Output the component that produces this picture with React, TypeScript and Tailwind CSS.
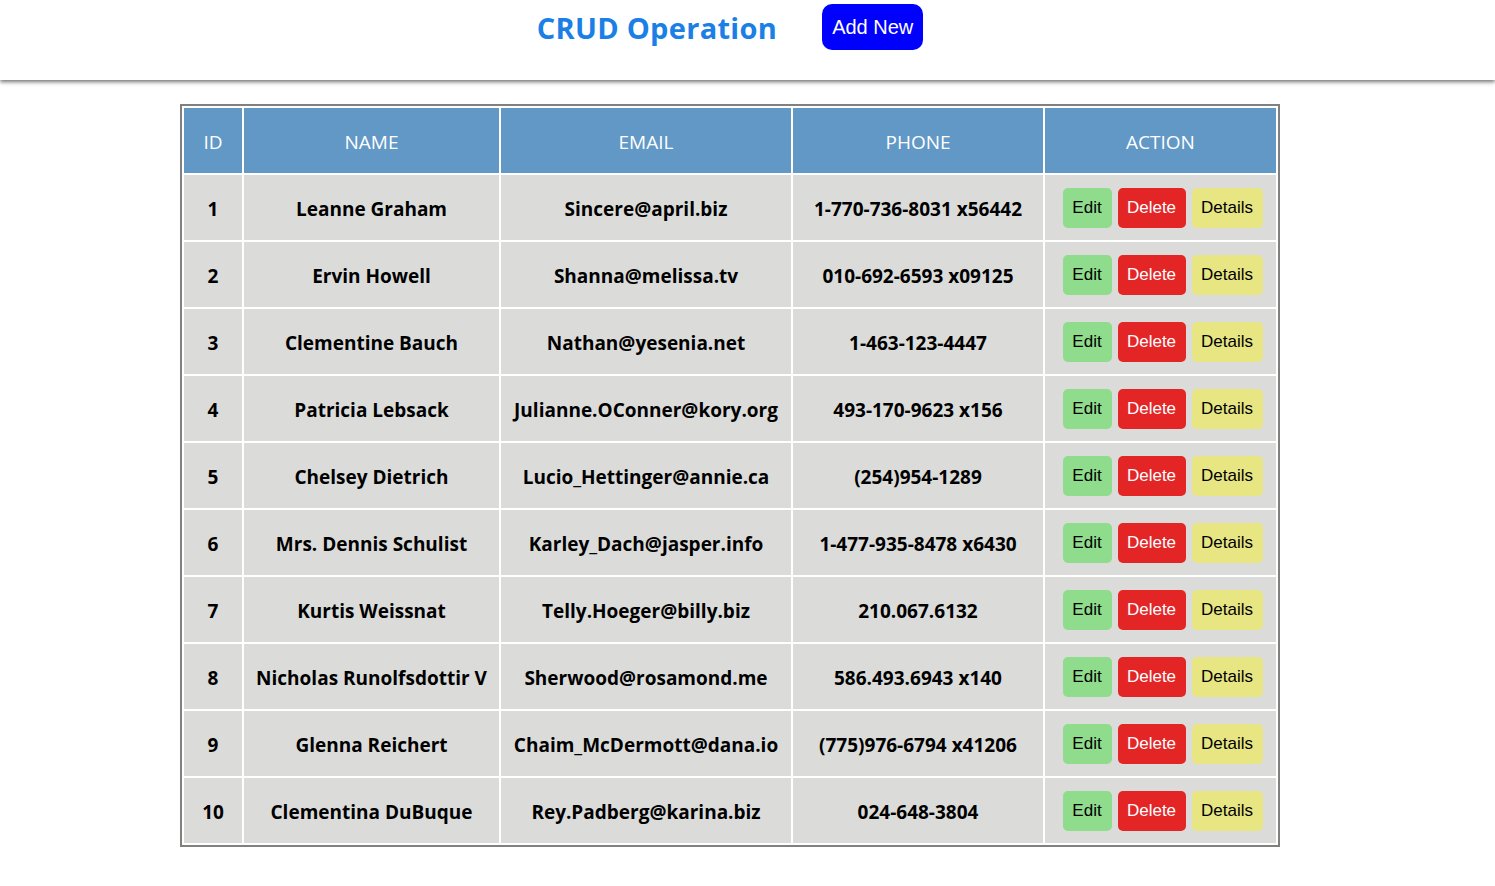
const users = [
  { id: 1, name: "Leanne Graham", email: "Sincere@april.biz", phone: "1-770-736-8031 x56442" },
  { id: 2, name: "Ervin Howell", email: "Shanna@melissa.tv", phone: "010-692-6593 x09125" },
  { id: 3, name: "Clementine Bauch", email: "Nathan@yesenia.net", phone: "1-463-123-4447" },
  { id: 4, name: "Patricia Lebsack", email: "Julianne.OConner@kory.org", phone: "493-170-9623 x156" },
  { id: 5, name: "Chelsey Dietrich", email: "Lucio_Hettinger@annie.ca", phone: "(254)954-1289" },
  { id: 6, name: "Mrs. Dennis Schulist", email: "Karley_Dach@jasper.info", phone: "1-477-935-8478 x6430" },
  { id: 7, name: "Kurtis Weissnat", email: "Telly.Hoeger@billy.biz", phone: "210.067.6132" },
  { id: 8, name: "Nicholas Runolfsdottir V", email: "Sherwood@rosamond.me", phone: "586.493.6943 x140" },
  { id: 9, name: "Glenna Reichert", email: "Chaim_McDermott@dana.io", phone: "(775)976-6794 x41206" },
  { id: 10, name: "Clementina DuBuque", email: "Rey.Padberg@karina.biz", phone: "024-648-3804" },
];

const App = () => {
  return (
    <div className="min-h-screen bg-white font-['Open_Sans',sans-serif]">
      <header className="h-20 flex justify-center items-start gap-[45px] pr-[35px] shadow-[0_2px_4px_rgba(0,0,0,0.55)]">
        <h1 className="mt-[6px] text-[29px] font-bold text-[#1b7fe6] tracking-[0.3px]">
          CRUD Operation
        </h1>
        <button className="mt-1 h-[46px] px-[10px] rounded-[10px] bg-[#0000ff] text-white text-[20px] font-['Liberation_Sans',sans-serif]">
          Add New
        </button>
      </header>

      <div className="mt-6 pl-[180px]">
        <table className="table-fixed w-[1100px] border-separate border-spacing-[2px] border-2 border-[#808080]">
          <colgroup>
            <col className="w-[58px]" />
            <col className="w-[255px]" />
            <col className="w-[290px]" />
            <col className="w-[250px]" />
            <col className="w-[231px]" />
          </colgroup>
          <thead>
            <tr className="h-[65px] bg-[#6198c6] text-white text-[19px]">
              <th className="font-normal pt-[3px]">ID</th>
              <th className="font-normal pt-[3px]">NAME</th>
              <th className="font-normal pt-[3px]">EMAIL</th>
              <th className="font-normal pt-[3px]">PHONE</th>
              <th className="font-normal pt-[3px]">ACTION</th>
            </tr>
          </thead>
          <tbody>
            {users.map((u) => (
              <tr key={u.id} className="h-[65px] bg-[#dbdcda] text-[19px] font-bold text-black text-center">
                <td className="pt-[3px]">{u.id}</td>
                <td className="pt-[3px]">{u.name}</td>
                <td className="pt-[3px]">{u.email}</td>
                <td className="pt-[3px]">{u.phone}</td>
                <td>
                  <div className="flex justify-center gap-[6px] pl-1 font-normal text-[17px] font-['Liberation_Sans',sans-serif]">
                    <button className="h-10 w-[49px] rounded-[5px] bg-[#8fdc8c] text-black">Edit</button>
                    <button className="h-10 w-[68px] rounded-[5px] bg-[#e32526] text-white">Delete</button>
                    <button className="h-10 w-[71px] rounded-[5px] bg-[#e8e683] text-black">Details</button>
                  </div>
                </td>
              </tr>
            ))}
          </tbody>
        </table>
      </div>
    </div>
  );
};

export default App;
